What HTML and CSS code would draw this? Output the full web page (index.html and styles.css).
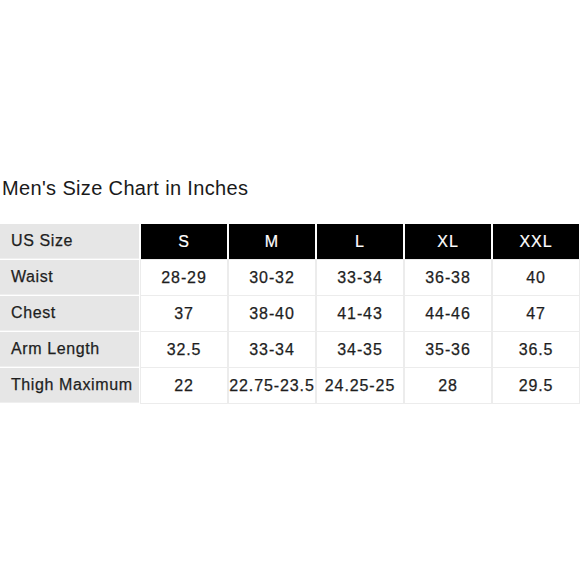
FILE: index.html
```html
<!DOCTYPE html>
<html>
<head>
<meta charset="utf-8">
<link rel="stylesheet" href="styles.css">
</head>
<body>
<div class="page">
  <h1 class="title">Men's Size Chart in Inches</h1>
  <div class="chart">
    <div class="label">US Size</div>
    <div class="head">S</div>
    <div class="head">M</div>
    <div class="head">L</div>
    <div class="head">XL</div>
    <div class="head">XXL</div>

    <div class="label">Waist</div>
    <div class="cell">28-29</div>
    <div class="cell">30-32</div>
    <div class="cell">33-34</div>
    <div class="cell">36-38</div>
    <div class="cell">40</div>

    <div class="label">Chest</div>
    <div class="cell">37</div>
    <div class="cell">38-40</div>
    <div class="cell">41-43</div>
    <div class="cell">44-46</div>
    <div class="cell">47</div>

    <div class="label">Arm Length</div>
    <div class="cell">32.5</div>
    <div class="cell">33-34</div>
    <div class="cell">34-35</div>
    <div class="cell">35-36</div>
    <div class="cell">36.5</div>

    <div class="label">Thigh Maximum</div>
    <div class="cell">22</div>
    <div class="cell">22.75-23.5</div>
    <div class="cell">24.25-25</div>
    <div class="cell">28</div>
    <div class="cell">29.5</div>
  </div>
</div>
</body>
</html>
```
FILE: styles.css
```css
html, body {
  margin: 0;
  padding: 0;
  background: #ffffff;
}

.page {
  width: 580px;
  height: 580px;
  padding-top: 176px;
  box-sizing: border-box;
  font-family: "Liberation Sans", Arial, sans-serif;
  color: #1a1a1a;
}

.title {
  margin: 0 0 24px 2px;
  font-size: 20px;
  font-weight: normal;
  line-height: 24px;
  letter-spacing: 0.35px;
}

.chart {
  display: grid;
  grid-template-columns: 139px repeat(5, 86px);
  grid-auto-rows: 35px;
  column-gap: 2px;
  row-gap: 1px;
  width: 579px;
}

.label {
  background: #e6e6e6;
  display: flex;
  align-items: center;
  padding-left: 11px;
  font-size: 16px;
  letter-spacing: 0.6px;
  color: #1e1e1e;
  -webkit-text-stroke: 0.25px #1e1e1e;
  border-bottom: 1px solid #efefef;
}

.head {
  background: #000;
  color: #fff;
  display: flex;
  align-items: center;
  justify-content: center;
  font-size: 16px;
  letter-spacing: 1px;
  -webkit-text-stroke: 0.2px #fff;
}

.cell {
  background: #fff;
  display: flex;
  align-items: center;
  justify-content: center;
  font-size: 16px;
  letter-spacing: 0.9px;
  color: #1e1e1e;
  -webkit-text-stroke: 0.25px #1e1e1e;
  white-space: nowrap;
  box-shadow: 0 0 0 1px #ececec;
}
```
